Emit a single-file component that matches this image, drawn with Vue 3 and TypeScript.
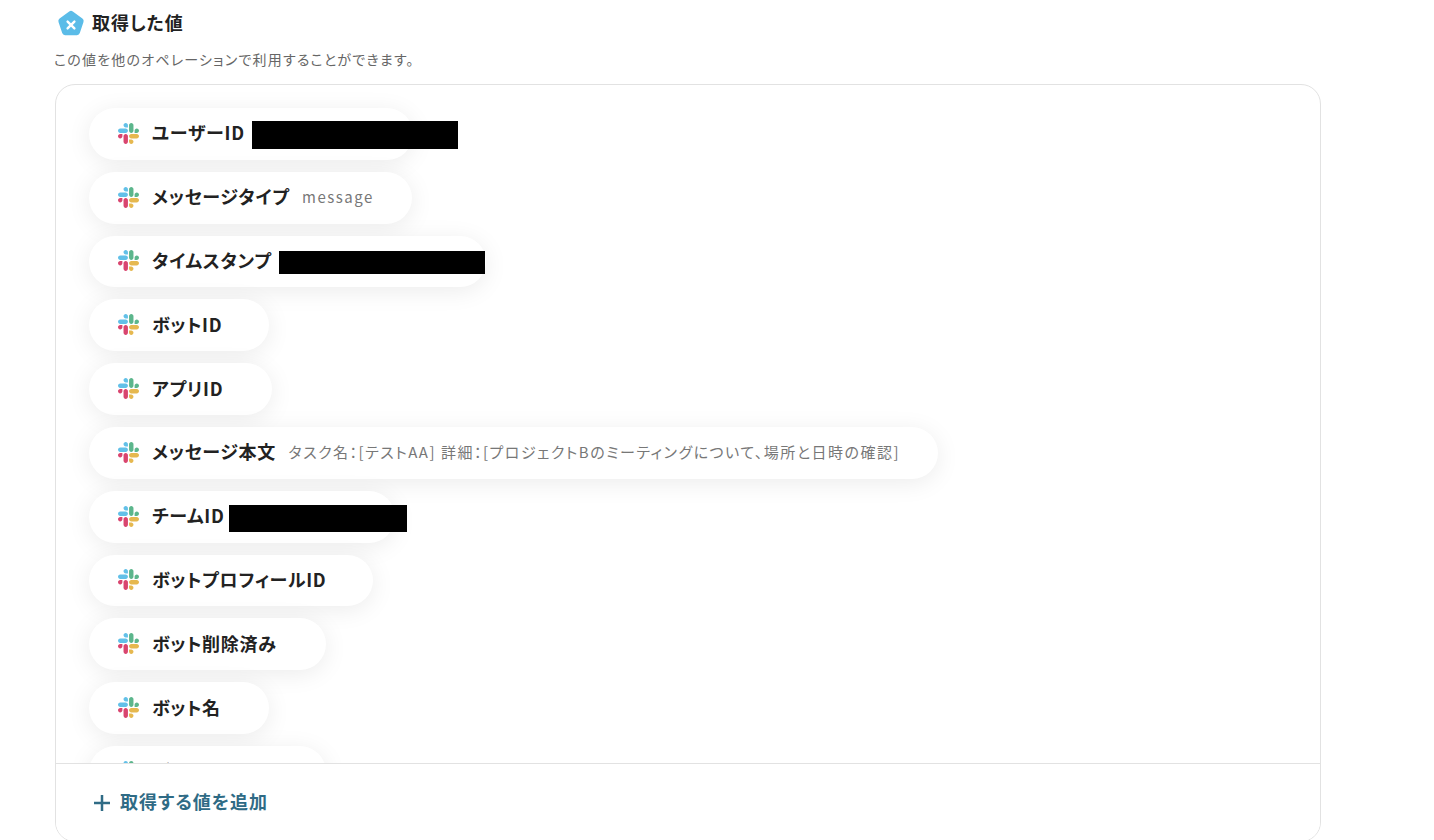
<script setup lang="ts">
interface OutputItem {
  label: string
  value?: string
  width: number
  mask?: number
}

const items: OutputItem[] = [
  { label: 'ユーザーID', width: 324, mask: 1 },
  { label: 'メッセージタイプ', value: 'message', width: 323 },
  { label: 'タイムスタンプ', width: 397, mask: 2 },
  { label: 'ボットID', width: 180 },
  { label: 'アプリID', width: 183 },
  {
    label: 'メッセージ本文',
    value: 'タスク名：[テストAA] 詳細：[プロジェクトBのミーティングについて、場所と日時の確認]',
    width: 849,
  },
  { label: 'チームID', width: 306, mask: 3 },
  { label: 'ボットプロフィールID', width: 284 },
  { label: 'ボット削除済み', width: 237 },
  { label: 'ボット名', width: 180 },
  { label: 'ボットチーム', width: 237 },
]
</script>

<template>
  <div class="page">
    <div class="title-row">
      <svg class="title-icon" viewBox="0 0 28 28" width="28" height="28">
        <path
          d="M12.2 1.5a3 3 0 0 1 3.6 0l9.6 7a3 3 0 0 1 1.1 3.4l-3.7 11.2a3 3 0 0 1-2.9 2.1H8.1a3 3 0 0 1-2.9-2.1L1.5 11.9a3 3 0 0 1 1.1-3.4z"
          fill="#5bbce8"
        />
        <path d="M10.6 11.6l6.8 6.8M17.4 11.6l-6.8 6.8" stroke="#fff" stroke-width="2.4" stroke-linecap="round" fill="none" />
      </svg>
      <h2 class="title">取得した値</h2>
    </div>
    <p class="desc">この値を他のオペレーションで利用することができます。</p>

    <section class="card">
      <div class="list">
        <div
          v-for="item in items"
          :key="item.label"
          class="pill"
          :style="{ width: item.width + 'px' }"
        >
          <svg class="slack" viewBox="0 0 122.8 122.8" width="21" height="21">
            <path d="M25.8 77.6c0 7.1-5.8 12.9-12.9 12.9S0 84.7 0 77.6s5.8-12.9 12.9-12.9h12.9v12.9zm6.5 0c0-7.1 5.8-12.9 12.9-12.9s12.9 5.8 12.9 12.9v32.3c0 7.1-5.8 12.9-12.9 12.9s-12.9-5.8-12.9-12.9V77.6z" fill="#d9456f" />
            <path d="M45.2 25.8c-7.1 0-12.9-5.8-12.9-12.9S38.1 0 45.2 0s12.9 5.8 12.9 12.9v12.9H45.2zm0 6.5c7.1 0 12.9 5.8 12.9 12.9s-5.8 12.9-12.9 12.9H12.9C5.8 58.1 0 52.3 0 45.2s5.8-12.9 12.9-12.9h32.3z" fill="#62c0e8" />
            <path d="M97 45.2c0-7.1 5.8-12.9 12.9-12.9s12.9 5.8 12.9 12.9-5.8 12.9-12.9 12.9H97V45.2zm-6.5 0c0 7.1-5.8 12.9-12.9 12.9s-12.9-5.8-12.9-12.9V12.9C64.7 5.8 70.5 0 77.6 0s12.9 5.8 12.9 12.9v32.3z" fill="#5cb68c" />
            <path d="M77.6 97c7.1 0 12.9 5.8 12.9 12.9s-5.8 12.9-12.9 12.9-12.9-5.8-12.9-12.9V97h12.9zm0-6.5c-7.1 0-12.9-5.8-12.9-12.9s5.8-12.9 12.9-12.9h32.3c7.1 0 12.9 5.8 12.9 12.9s-5.8 12.9-12.9 12.9H77.6z" fill="#e6b84f" />
          </svg>
          <span class="label">{{ item.label }}</span>
          <span v-if="item.value" class="value">{{ item.value }}</span>
          <span v-if="item.mask" class="mask" :class="'mask-' + item.mask"></span>
        </div>
      </div>
      <div class="footer">
        <svg class="plus" viewBox="0 0 18 18" width="18" height="18">
          <path d="M9 1v16M1 9h16" stroke="#2f6b85" stroke-width="2.5" fill="none" />
        </svg>
        <span>取得する値を追加</span>
      </div>
    </section>
  </div>
</template>

<style scoped>
.page {
  width: 1434px;
  height: 840px;
  overflow: hidden;
  box-sizing: border-box;
  padding: 9px 0 0 55px;
  font-family: 'Noto Sans CJK JP', 'Noto Sans', sans-serif;
  font-feature-settings: 'palt';
  color: #222;
}

.title-row {
  display: flex;
  align-items: center;
  gap: 7px;
  height: 30px;
  padding-left: 2px;
}

.title {
  margin: 0 0 4px;
  font-size: 18px;
  font-weight: 700;
  line-height: 28px;
  letter-spacing: 0.9px;
}

.desc {
  margin: 9px 0 0 -1px;
  font-size: 14px;
  line-height: 22px;
  color: #666;
  letter-spacing: 1.2px;
}

.card {
  margin-top: 14px;
  width: 1266px;
  height: 758px;
  box-sizing: border-box;
  border: 1px solid #e2e2e2;
  border-radius: 20px;
  display: flex;
  flex-direction: column;
  overflow: hidden;
  background: #fff;
}

.list {
  flex: 1;
  min-height: 0;
  overflow: hidden;
  padding: 23px 33px 0;
  display: flex;
  flex-direction: column;
  gap: 12px;
}

.pill {
  position: relative;
  flex: none;
  height: 51.8px;
  box-sizing: border-box;
  padding-left: 29px;
  display: flex;
  align-items: center;
  border-radius: 26px;
  background: #fff;
  box-shadow: 0 4px 24px rgba(0, 0, 0, 0.08);
}

.slack {
  flex: none;
  margin-right: 13px;
  margin-bottom: 1px;
}

.label {
  margin-bottom: 3px;
  font-size: 18px;
  font-weight: 700;
  letter-spacing: 0.7px;
  white-space: nowrap;
  color: #222;
}

.value {
  margin-left: 12.5px;
  margin-bottom: 2px;
  font-size: 15px;
  letter-spacing: 1.5px;
  color: #777;
  white-space: nowrap;
}

.mask {
  position: absolute;
  background: #000;
}

.mask-1 {
  left: 163px;
  top: 13px;
  width: 206px;
  height: 28px;
}

.mask-2 {
  left: 190px;
  top: 15px;
  width: 206px;
  height: 23px;
}

.mask-3 {
  left: 140px;
  top: 14px;
  width: 178px;
  height: 27px;
}

.footer {
  flex: none;
  height: 78px;
  border-top: 1px solid #e2e2e2;
  display: flex;
  align-items: center;
  gap: 9px;
  padding-left: 37px;
  box-sizing: border-box;
  font-size: 18px;
  font-weight: 700;
  letter-spacing: 1px;
  color: #2f6b85;
  background: #fff;
}

.footer span {
  position: relative;
  top: -2px;
}
</style>

<style>
html,
body {
  margin: 0;
  background: #fff;
  overflow: hidden;
}
</style>
